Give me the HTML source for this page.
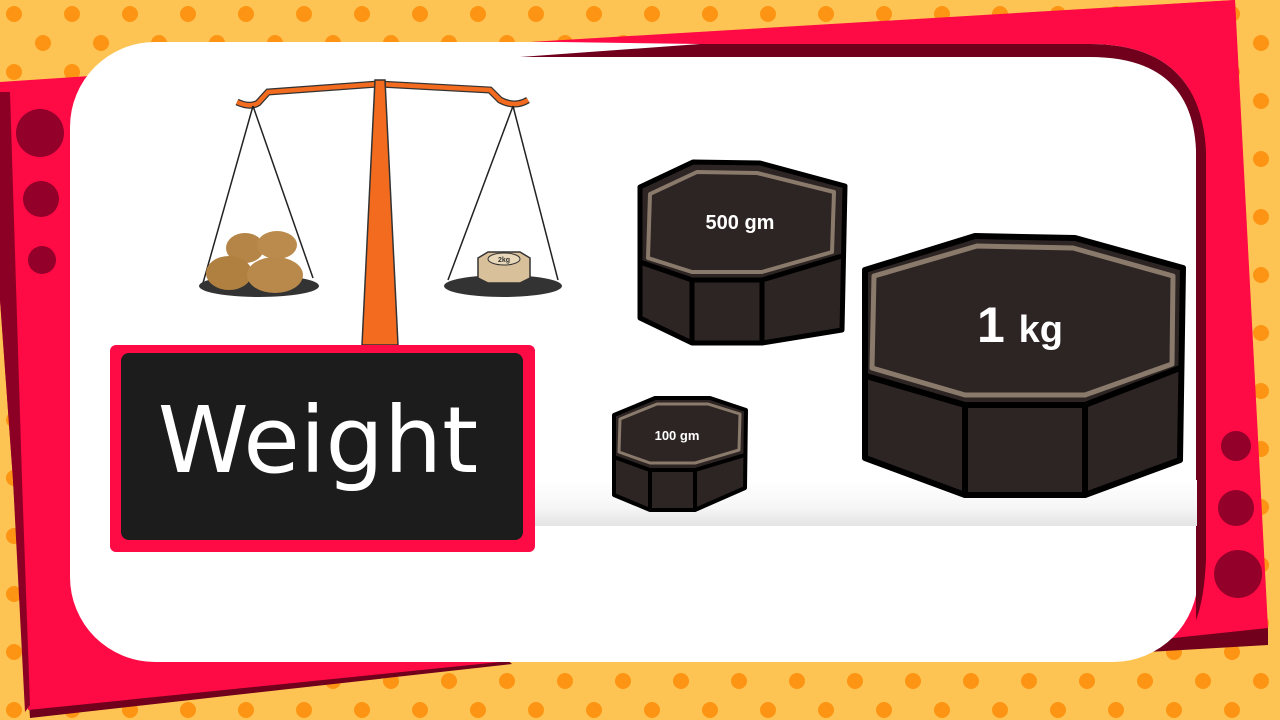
<!DOCTYPE html>
<html><head><meta charset="utf-8"><style>
html,body{margin:0;padding:0;width:1280px;height:720px;overflow:hidden;background:#fec453}
svg{position:absolute;left:0;top:0}
</style></head><body>
<svg width="1280" height="720" viewBox="0 0 1280 720" xmlns="http://www.w3.org/2000/svg">
<defs>
<pattern id="dots" width="58" height="58" patternUnits="userSpaceOnUse">
<circle cx="14" cy="14" r="8" fill="#fd9414"/><circle cx="43" cy="43" r="8" fill="#fd9414"/>
</pattern>
<linearGradient id="floor" x1="0" y1="0" x2="0" y2="1">
<stop offset="0" stop-color="#fff"/><stop offset="0.6" stop-color="#f6f6f6"/><stop offset="1" stop-color="#e4e4e4"/>
</linearGradient>
</defs>
<rect width="1280" height="720" fill="#fec453"/>
<rect width="1280" height="720" fill="url(#dots)"/>
<!-- dark red shadows -->
<polygon points="0,300 13,480 30,718 512,664 505,658 28,708 13,480" fill="#70001c"/>
<polygon points="1150,640 1268,626 1268,645 1148,652" fill="#70001c"/>
<!-- red frame -->
<polygon points="0,82 105,75 530,42 1235,0 1268,628 1155,640 500,662 28,710 13,480 0,300" fill="#fe0a45"/>
<polygon points="0,92 10,92 22,480 30,705 25,712 13,480 0,300" fill="#8b0024"/>
<circle cx="40" cy="133" r="24" fill="#93002a"/>
<circle cx="41" cy="199" r="18" fill="#93002a"/>
<circle cx="42" cy="260" r="14" fill="#93002a"/>
<circle cx="1236" cy="446" r="15" fill="#93002a"/>
<circle cx="1236" cy="508" r="18" fill="#93002a"/>
<circle cx="1238" cy="574" r="24" fill="#93002a"/>
<!-- white panel -->
<rect x="70" y="42" width="1128" height="620" rx="85" fill="#fff"/>
<!-- top-right red wedge over panel -->
<path d="M520,57 L700,44 L1090,44 Q1200,44 1206,150 L1206,560 Q1204,600 1196,620 L1196,150 Q1192,57 1090,57 Z" fill="#70001c"/>
<path d="M560,42 L1235,0 L1260,620 L1206,620 L1206,150 Q1200,44 1090,44 L700,44 Z" fill="#fe0a45"/>
<circle cx="1236" cy="446" r="15" fill="#93002a"/>
<circle cx="1236" cy="508" r="18" fill="#93002a"/>
<circle cx="1238" cy="574" r="24" fill="#93002a"/>
<rect x="530" y="480" width="667" height="46" fill="url(#floor)"/>
<!-- scale -->
<path d="M237,102 Q250,108 258,103 L268,92 L378,84 L490,90 L500,100 Q515,108 528,100" fill="none" stroke="#333" stroke-width="7"/>
<path d="M237,102 Q250,108 258,103 L268,92 L378,84 L490,90 L500,100 Q515,108 528,100" fill="none" stroke="#f26b1e" stroke-width="4.5"/>
<polygon points="375,80 385,80 398,345 362,345" fill="#f26b1e" stroke="#333" stroke-width="1.5"/>
<line x1="253" y1="106" x2="203" y2="283" stroke="#222" stroke-width="1.5"/>
<line x1="253" y1="106" x2="313" y2="278" stroke="#222" stroke-width="1.5"/>
<line x1="513" y1="106" x2="448" y2="280" stroke="#222" stroke-width="1.5"/>
<line x1="513" y1="106" x2="558" y2="280" stroke="#222" stroke-width="1.5"/>
<ellipse cx="259" cy="286" rx="60" ry="11" fill="#333"/>
<ellipse cx="503" cy="286" rx="59" ry="11" fill="#333"/>
<ellipse cx="245" cy="248" rx="19" ry="15" fill="#b58547"/>
<ellipse cx="277" cy="245" rx="20" ry="14" fill="#ba8b4c"/>
<ellipse cx="229" cy="273" rx="23" ry="17" fill="#b08040"/>
<ellipse cx="275" cy="275" rx="28" ry="18" fill="#b8894a"/>
<polygon points="478,258 488,252 520,252 530,258 530,278 520,283 488,283 478,278" fill="#d8c09a" stroke="#333" stroke-width="1.5"/>
<ellipse cx="504" cy="259" rx="16" ry="6" fill="#e8d7b8" stroke="#333"/>
<text x="504" y="262" font-family="Liberation Sans" font-size="7" font-weight="bold" text-anchor="middle" fill="#333">2kg</text>
<!-- sign -->
<rect x="110" y="345" width="425" height="207" rx="6" fill="#fe0a45"/>
<rect x="121" y="353" width="402" height="187" rx="8" fill="#1c1c1c"/>
<text x="318" y="472" font-family="DejaVu Sans, Liberation Sans, sans-serif" font-size="92" fill="#fff" text-anchor="middle">Weight</text>
<!-- 500gm -->
<g stroke="#000" stroke-width="5" stroke-linejoin="round" fill="#2d2523">
<polygon points="640,187 693,162 760,163 845,186 842,330 762,343 692,343 640,318"/>
<polyline points="640,262 692,280 762,280 842,256" fill="none"/>
<line x1="692" y1="280" x2="692" y2="343"/><line x1="762" y1="280" x2="762" y2="343"/>
<polygon points="650,194 697,172 757,173 834,192 832,252 762,272 692,272 648,258" fill="none" stroke="#8a7a6b" stroke-width="4"/>
</g>
<text x="740" y="229" font-family="Liberation Sans" font-weight="bold" font-size="20" fill="#fff" text-anchor="middle">500 gm</text>
<!-- 100gm -->
<g stroke="#000" stroke-width="4" stroke-linejoin="round" fill="#2d2523">
<polygon points="614,415 655,398 710,398 746,410 745,488 695,510 650,510 614,495"/>
<polyline points="614,457 650,470 695,470 745,455" fill="none"/>
<line x1="650" y1="470" x2="650" y2="510"/><line x1="695" y1="470" x2="695" y2="510"/>
<polygon points="620,419 657,404 708,404 740,414 739,450 695,463 650,463 619,452" fill="none" stroke="#8a7a6b" stroke-width="3"/>
</g>
<text x="677" y="440" font-family="Liberation Sans" font-weight="bold" font-size="13" fill="#fff" text-anchor="middle">100 gm</text>
<!-- 1kg -->
<g stroke="#000" stroke-width="6" stroke-linejoin="round" fill="#2d2523">
<polygon points="865,270 975,236 1075,238 1183,268 1180,460 1085,495 965,495 865,458"/>
<polyline points="866,376 965,405 1085,405 1180,368" fill="none"/>
<line x1="965" y1="405" x2="965" y2="495"/><line x1="1085" y1="405" x2="1085" y2="495"/>
<polygon points="874,276 977,246 1073,248 1173,276 1172,364 1085,395 965,395 872,368" fill="none" stroke="#8a7a6b" stroke-width="5"/>
</g>
<text x="1020" y="342" font-family="Liberation Sans" font-weight="bold" font-size="50" fill="#fff" text-anchor="middle">1 <tspan font-size="38">kg</tspan></text>
</svg>
</body></html>
